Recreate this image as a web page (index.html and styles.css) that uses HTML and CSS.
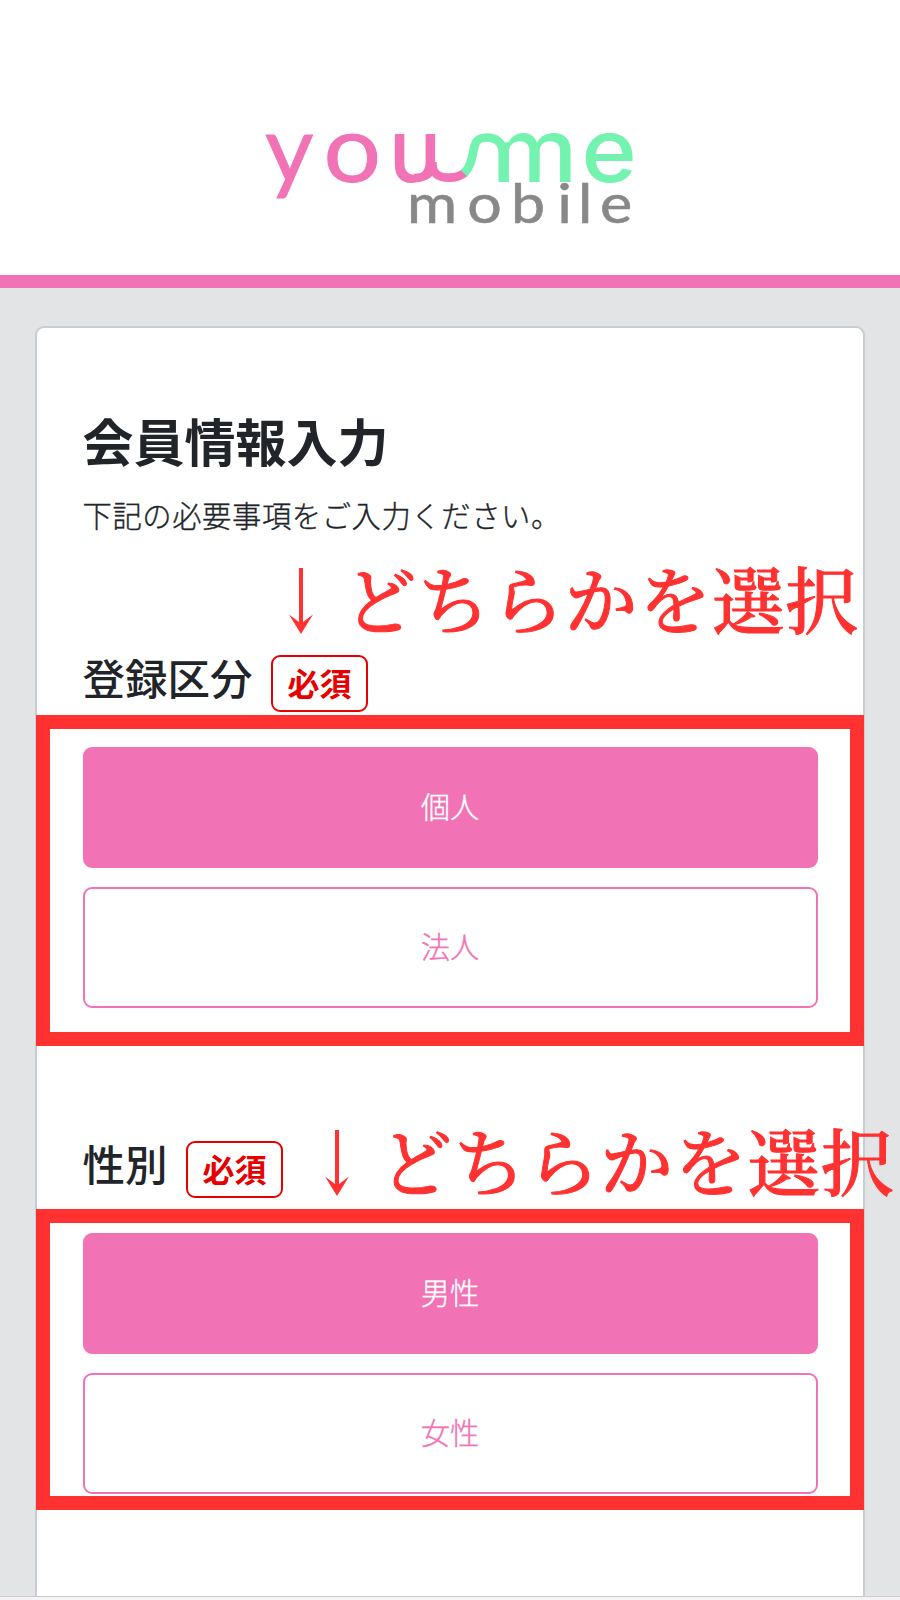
FILE: index.html
```
<!DOCTYPE html>
<html lang="ja">
<head>
<meta charset="utf-8">
<title>youme mobile</title>
<link rel="stylesheet" href="styles.css">
</head>
<body>
<div class="screen">
  <header class="header">
    <svg class="logo" viewBox="0 0 380 100" role="img" aria-label="youme mobile">
      <defs>
        <clipPath id="u-edge"><path d="M128 0H178V40L168 45 164 60H128Z"/></clipPath>
        <clipPath id="m-edge"><path d="M238 16 L248 14 252 0H320V70H238Z"/></clipPath>
      </defs>
      <text class="lato pink" x="5" y="54">y</text>
      <text class="lato pink" transform="translate(63.500 54) scale(1.08 1)">o</text>
      <g clip-path="url(#u-edge)"><text class="inter pink" x="128.500" y="54">u</text></g>
      <g clip-path="url(#m-edge)"><text class="inter green" transform="translate(231.500 54) scale(1.1 1)">m</text></g>
      <text class="inter green" transform="translate(321.500 54) scale(1.07 1)">e</text>
      <path class="swoosh pink-line" d="M154 50 C166 49.700 172.300 46 172.300 34 C172.300 46 178 49.700 189 49.700 C196 49.700 201 48 205 44.500" stroke-linejoin="bevel"/>
      <path class="swoosh green-line" d="M204 45.400 C219 30 207 9.500 227 9.500 C238 9.500 243.500 16 243.500 28"/>
      <text class="sub" transform="translate(0 94.500) scale(1.13 1)" x="130.200 183.400 222.200 263 281.500 301">mobile</text>
    </svg>
  </header>
  <main class="page">
    <section class="card">
      <h1 class="title">会員情報入力</h1>
      <p class="lead">下記の必要事項をご入力ください。</p>
      <div class="label first"><h2>登録区分</h2><span class="badge">必須</span></div>
      <div class="choices">
        <button class="choice selected">個人</button>
        <button class="choice">法人</button>
      </div>
      <div class="label second"><h2>性別</h2><span class="badge">必須</span></div>
      <div class="choices">
        <button class="choice selected">男性</button>
        <button class="choice">女性</button>
      </div>
    </section>
  </main>
  <div class="toolbar"></div>
  <div class="frame frame-type"></div>
  <div class="frame frame-gender"></div>
  <div class="note note-type">
    <svg class="arrow" viewBox="0 0 24 66"><path d="M10 0h4v54l10-7.500L12 66 0 46.500l10 7.500z"/></svg>
    <span>どちらかを選択</span>
  </div>
  <div class="note note-gender">
    <svg class="arrow" viewBox="0 0 24 66"><path d="M10 0h4v54l10-7.500L12 66 0 46.500l10 7.500z"/></svg>
    <span>どちらかを選択</span>
  </div>
</div>
</body>
</html>
```

FILE: styles.css
```
* { box-sizing: border-box; }
body { margin: 0; font-family: "Noto Sans CJK JP", sans-serif; color: #212529; }
h1, h2, p { margin: 0; }
.screen { position: relative; width: 900px; height: 1600px; overflow: hidden; display: flex; flex-direction: column; background: #e3e4e6; }
.header { height: 288px; flex: none; background: #fff; border-bottom: 13px solid #f173b5; padding: 128px 0 0 260px; }
.logo { display: block; width: 380px; height: 100px; overflow: visible; }
.inter { font: 500 88px Inter, sans-serif; }
.lato { font: 400 94px Lato, sans-serif; stroke-width: 0.900px; }
.pink { fill: #f173b5; stroke: #f173b5; }
.green { fill: #74f2b0; }
.inter.pink { stroke: none; }
.swoosh { fill: none; stroke-width: 8.700px; }
.pink-line { stroke: #f173b5; }
.green-line { stroke: #74f2b0; }
.sub { font: 400 54px Lato, sans-serif; fill: #888; stroke: #888; stroke-width: 0.600px; }
.page { flex: 1; min-height: 0; padding: 38px 35px 0; overflow: hidden; }
.card { height: 1290px; background: #fff; border: 2px solid #c6cdd3; border-radius: 9px; padding: 74px 45.500px 0; }
.title { font-size: 51px; line-height: 76px; font-weight: 700; }
.lead { margin-top: 14px; font-size: 29.300px; letter-spacing: 0.600px; line-height: 44px; font-weight: 300; -webkit-text-stroke: 0.350px currentColor; }
.label { display: flex; align-items: flex-start; height: 58px; }
.label h2 { margin-top: -2px; font-size: 42.500px; line-height: 48px; font-weight: 500; }
.first { margin-top: 119px; }
.second { margin-top: 133px; }
.badge { width: 97px; height: 57px; margin-left: 18.500px; border: 2px solid #e60000; border-radius: 9px; color: #e60000; font-size: 32px; font-weight: 700; line-height: 51px; text-align: center; }
.choices { margin-top: 34px; display: grid; gap: 19px; }
.choice { height: 121px; width: 735px; padding: 0 0 6px; border: 2px solid #f173b5; border-radius: 9px; background: #fff; color: #f173b5; font: 300 29.300px "Noto Sans CJK JP", sans-serif; -webkit-text-stroke: 0.350px currentColor; }
.selected { background: #f173b5; color: #fff; }
.toolbar { flex: none; height: 4px; background: #f5f3f4; border-top: 1px solid #c8c9cb; }
.frame { position: absolute; left: 36px; width: 828px; border: 14px solid #ff3131; }
.frame-type { top: 715px; height: 331px; }
.frame-gender { top: 1209px; height: 301px; }
.note { position: absolute; display: flex; color: #ff3131; font: 500 72.500px/80px "Noto Serif CJK JP", "Noto Serif JP", "Noto Sans CJK JP", serif; letter-spacing: 1.100px; white-space: nowrap; }
.arrow { width: 24px; height: 66px; fill: #ff3131; margin: 0 31px 0 0; }
.note span { margin-top: -11px; -webkit-text-stroke: 1px currentColor; }
.note-type { left: 289px; top: 568px; }
.note-gender { left: 324.500px; top: 1130px; }
```
